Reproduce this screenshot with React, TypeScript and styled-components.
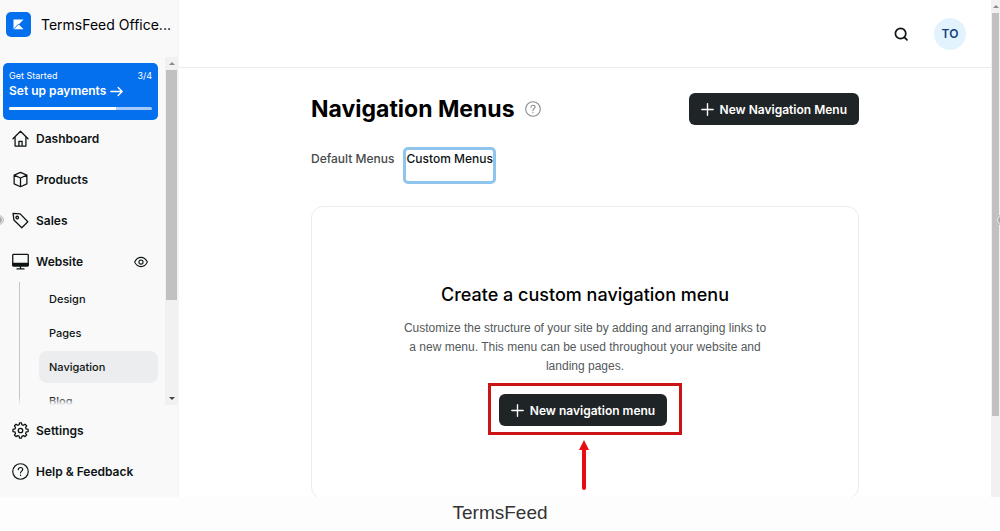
import React from "react";
import styled, { createGlobalStyle, css } from "styled-components";

const Global = createGlobalStyle`
  *, *::before, *::after { box-sizing: border-box; }
  body { margin: 0; background: #fff; color: #0e1414; font-family: Inter, "Liberation Sans", sans-serif; }
  button, a { font: inherit; color: inherit; text-decoration: none; }
  h1, h2, p, ul, figure { margin: 0; padding: 0; }
  ul { list-style: none; }
  svg { flex: none; }
`;

const Figure = styled.figure`
  display: flex;
  flex-direction: column;
  height: 100vh;
`;

const Caption = styled.figcaption`
  flex: none;
  height: 34px;
  line-height: 32px;
  text-align: center;
  font-family: "Liberation Sans", Arial, sans-serif;
  font-size: 19px;
  color: #333;
  background: #fdfdfd;
`;

const Shell = styled.div`
  position: relative;
  flex: 1;
  min-height: 0;
  display: flex;
  overflow: hidden;
`;

const Sidebar = styled.aside`
  flex: none;
  width: 179px;
  display: flex;
  flex-direction: column;
  background: #f9f9fa;
  border-right: 1px solid #f6f6f7;
`;

const Brand = styled.div`
  flex: none;
  height: 57px;
  padding: 12px 6px 0;
  display: flex;
  align-items: flex-start;
  gap: 10px;
`;

const BrandName = styled.span`
  font-size: 14px;
  font-weight: 400;
  line-height: 25px;
  color: #000;
  white-space: nowrap;
`;

const ScrollRegion = styled.div`
  flex: 1;
  min-height: 0;
  display: flex;
`;

const NavViewport = styled.nav`
  position: relative;
  flex: 1;
  overflow: hidden;
  padding: 6px 7px 0 3px;
  &::after {
    content: "";
    position: absolute;
    left: 0;
    right: 0;
    bottom: 0;
    height: 8px;
    background: linear-gradient(#f9f9fa00, #f9f9fa);
  }
`;

const Track = styled.div<{ $width: number }>`
  flex: none;
  width: ${(p) => p.$width}px;
  display: flex;
  flex-direction: column;
  align-items: center;
  background: #f1f1f1;
`;

const Thumb = styled.div<{ $share: string }>`
  width: calc(100% - 2px);
  height: ${(p) => p.$share};
  background: #c1c1c1;
`;

const ArrowCap = styled.span<{ $down?: boolean; $tone: string }>`
  flex: none;
  height: 13px;
  display: flex;
  align-items: center;
  margin-top: ${(p) => (p.$down ? "auto" : 0)};
  &::before {
    content: "";
    border: 3px solid transparent;
    ${(p) =>
      p.$down
        ? css`border-top-color: ${p.$tone}; border-bottom: 0;`
        : css`border-bottom-color: ${p.$tone}; border-top: 0;`}
  }
`;

const SetupCard = styled.a`
  display: block;
  height: 57px;
  padding: 7px 6px;
  border-radius: 5px;
  background: #0570ee;
  color: #fff;
`;

const SetupMeta = styled.div`
  display: flex;
  justify-content: space-between;
  font-size: 9px;
  line-height: 12px;
`;

const SetupTitle = styled.div`
  display: flex;
  align-items: center;
  gap: 4px;
  font-size: 12px;
  font-weight: 600;
  line-height: 18px;
`;

const Progress = styled.div`
  margin-top: 7px;
  height: 3px;
  border-radius: 2px;
  background: #a6cbfa;
  overflow: hidden;
  &::before {
    content: "";
    display: block;
    width: 75%;
    height: 100%;
    background: #fff;
  }
`;

const NavList = styled.ul`
  display: grid;
  gap: 4px;
`;

const NavItem = styled.a`
  display: flex;
  align-items: center;
  gap: 7px;
  height: 37px;
  padding: 0 10px 0 9px;
  font-size: 12px;
  font-weight: 600;
  white-space: nowrap;
  svg:last-child { margin-left: auto; }
`;

const SubList = styled.ul`
  margin: 2px 0 0 16px;
  padding: 1px 0 0 19px;
  border-left: 1px solid #c3c6c9;
`;

const SubItem = styled.a<{ $active?: boolean }>`
  display: flex;
  align-items: center;
  height: 32px;
  margin-bottom: 2px;
  padding: 0 10px;
  border-radius: 8px;
  font-size: 11px;
  font-weight: 500;
  background: ${(p) => (p.$active ? "#ebedef" : "transparent")};
`;

const SidebarFooter = styled.nav`
  flex: none;
  height: 92px;
  padding: 7px 3px 0;
`;

const Main = styled.main`
  flex: 1;
  min-width: 0;
  display: flex;
  flex-direction: column;
`;

const TopBar = styled.header`
  flex: none;
  height: 68px;
  padding: 0 25px;
  display: flex;
  align-items: center;
  justify-content: flex-end;
  gap: 25px;
  border-bottom: 1px solid #ececee;
`;

const IconButton = styled.button`
  display: flex;
  padding: 0;
  border: 0;
  background: none;
`;

const Avatar = styled.button`
  width: 32px;
  height: 32px;
  padding: 0;
  border: 0;
  border-radius: 50%;
  background: #e3f3fe;
  color: #143f7c;
  font-size: 12px;
  font-weight: 600;
`;

const Content = styled.div`
  width: 100%;
  max-width: 548px;
  margin: 0 auto;
  padding-top: 25px;
`;

const TitleRow = styled.div`
  display: flex;
  align-items: center;
  gap: 10px;
`;

const Title = styled.h1`
  font-size: 23px;
  font-weight: 700;
  line-height: 32px;
  color: #000;
  white-space: nowrap;
`;

const PrimaryButton = styled.button`
  display: flex;
  align-items: center;
  gap: 6px;
  height: 32px;
  padding: 0 12px;
  border: 0;
  border-radius: 6px;
  background: #1f2426;
  color: #fff;
  font-size: 12px;
  font-weight: 600;
  white-space: nowrap;
  ${TitleRow} & { margin-left: auto; }
`;

const Tabs = styled.div`
  display: flex;
  align-items: flex-start;
  gap: 9px;
  margin-top: 22px;
`;

const Tab = styled.button<{ $focused?: boolean }>`
  height: 37px;
  padding: 0 0 13px;
  border: solid ${(p) => (p.$focused ? "#8fc4ec" : "transparent")};
  border-width: ${(p) => (p.$focused ? "3px" : "3px 0")};
  border-radius: 5px;
  background: none;
  color: ${(p) => (p.$focused ? "#0e1414" : "#44494b")};
  font-size: 12px;
  font-weight: 500;
  line-height: 18px;
  white-space: nowrap;
`;

const EmptyCard = styled.section`
  display: flex;
  flex-direction: column;
  align-items: center;
  margin-top: 22px;
  padding: 74px 88px 63px;
  border: 1px solid #ececee;
  border-radius: 12px;
  text-align: center;
`;

const EmptyTitle = styled.h2`
  font-size: 18px;
  font-weight: 500;
  line-height: 28px;
  color: #000;
  white-space: nowrap;
`;

const EmptyText = styled.p`
  margin-top: 10px;
  font-family: "Liberation Sans", Arial, sans-serif;
  font-size: 12px;
  line-height: 19px;
  color: #54595b;
`;

const Highlight = styled.div`
  position: relative;
  margin-top: 7px;
  padding: 8px 12px 6px 8px;
  border: 3px solid #cc1417;
`;

const Pointer = styled.svg`
  position: absolute;
  top: 100%;
  left: 50%;
  margin: 8px 0 0 -7px;
`;

const PanelHandle = styled.span<{ $side: "left" | "right" }>`
  position: absolute;
  top: 215px;
  ${(p) => p.$side}: -6px;
  width: 10px;
  height: 10px;
  border: 1px solid #c4c4c4;
  border-radius: 50%;
  background: #aaa;
  box-shadow: inset 0 0 0 1px #eee;
`;

type IconProps = { size: number; children: React.ReactNode; weight?: number; color?: string };
const Icon = ({ size, children, weight = 1.2, color = "currentColor" }: IconProps) => (
  <svg width={size} height={size} viewBox="0 0 16 16" fill="none" stroke={color} strokeWidth={weight} strokeLinejoin="round" strokeLinecap="round" aria-hidden="true">
    {children}
  </svg>
);

const Plus = () => <Icon size={13} weight={1.7}><path d="M8 1v14M1 8h14" /></Icon>;
const Help = ({ size, color }: { size: number; color?: string }) => (
  <Icon size={size} color={color} weight={1.1}>
    <circle cx="8" cy="8" r="7.3" />
    <path d="M5.900 6.200c.1-1.300 1-2 2.100-2 1.200 0 2.100.8 2.100 1.900 0 1.500-2.100 1.700-2.100 3.300M8 11.400v.3" />
  </Icon>
);

const House = () => <Icon size={17}><path d="M.9 8.200 8 1.200l7.100 7M2.900 6.600v8.500h10.200V6.600M6.500 15v-4.300h3V15" /></Icon>;
const Box = () => <Icon size={17}><path d="M8 1.300l6 2.500v8.300l-6 2.700-6-2.700V3.800zM2 3.900l6 2.700 6-2.700M8 6.600v8.100" /></Icon>;
const Tag = () => <Icon size={17}><path d="M1 1.300l6.700.5 7.200 7.400-5.700 5.600L1.800 7.600z" /><circle cx="4.900" cy="5.200" r="1.200" /></Icon>;
const Monitor = () => (
  <Icon size={17}>
    <rect x=".7" y="1.200" width="14.600" height="11" rx=".8" />
    <path d="M.9 9.700h14.200v2.300H.9z" fill="currentColor" />
    <path d="M8 12v2.900M4.700 15h6.600" />
  </Icon>
);
const Eye = () => <Icon size={14}><path d="M.7 8C2.400 4.600 5 2.700 8 2.700s5.600 1.900 7.300 5.300c-1.700 3.400-4.300 5.300-7.300 5.300S2.400 11.400.7 8z" /><circle cx="8" cy="8" r="2.400" /></Icon>;
const Gear = () => (
  <Icon size={17}>
    <path d="M6.700 2.600 7.100.8h1.800l.4 1.800 1.300.5 1.600-1 1.600 1.500-1 1.600.5 1.300 1.900.5v2l-1.900.4-.5 1.300 1 1.600-1.500 1.500-1.600-1-1.300.5-.5 1.900H7.100l-.4-1.900-1.300-.5-1.600 1-1.500-1.500 1-1.600-.5-1.300-1.900-.4v-2l1.900-.5.5-1.300-1-1.600 1.500-1.500 1.600 1z" />
    <circle cx="8" cy="8" r="2.100" />
  </Icon>
);

const Logo = () => (
  <svg width="25" height="25" viewBox="0 0 25 25" role="img" aria-label="Brand logo">
    <rect width="25" height="25" rx="5" fill="#0570ee" />
    <path d="M7.500 7.500h10L12.700 12.400l4.800 4.900h-10z" fill="#fff" />
    <path d="M7 17.800 12.700 12" stroke="#0570ee" strokeWidth=".9" />
  </svg>
);

const pages = ["Design", "Pages", "Navigation", "Blog"];

export default function App() {
  return (
    <>
      <Global />
      <Figure>
        <Shell>
          <Sidebar>
            <Brand><Logo /><BrandName>TermsFeed Office...</BrandName></Brand>
            <ScrollRegion>
              <NavViewport>
                <SetupCard href="#setup">
                  <SetupMeta><span>Get Started</span><span>3/4</span></SetupMeta>
                  <SetupTitle>
                    Set up payments
                    <Icon size={13} weight={1.6}><path d="M1 8h14M10 3l5 5-5 5" /></Icon>
                  </SetupTitle>
                  <Progress />
                </SetupCard>
                <NavList>
                  <li><NavItem href="#dashboard"><House /><span>Dashboard</span></NavItem></li>
                  <li><NavItem href="#products"><Box /><span>Products</span></NavItem></li>
                  <li><NavItem href="#sales"><Tag /><span>Sales</span></NavItem></li>
                  <li>
                    <NavItem href="#website"><Monitor /><span>Website</span><Eye /></NavItem>
                    <SubList>
                      {pages.map((p) => (
                        <li key={p}><SubItem href={"#" + p.toLowerCase()} $active={p === "Navigation"}>{p}</SubItem></li>
                      ))}
                    </SubList>
                  </li>
                </NavList>
              </NavViewport>
              <Track $width={13}>
                <ArrowCap $tone="#8b8b8b" />
                <Thumb $share="66%" />
                <ArrowCap $down $tone="#444" />
              </Track>
            </ScrollRegion>
            <SidebarFooter>
              <NavList>
                <li><NavItem href="#settings"><Gear /><span>Settings</span></NavItem></li>
                <li><NavItem href="#help"><Help size={17} /><span>Help &amp; Feedback</span></NavItem></li>
              </NavList>
            </SidebarFooter>
          </Sidebar>
          <Main>
            <TopBar>
              <IconButton aria-label="Search">
                <Icon size={16} weight={1.7}><circle cx="7.600" cy="7.500" r="5.200" /><path d="M11.400 11.300l2.600 2.600" /></Icon>
              </IconButton>
              <Avatar>TO</Avatar>
            </TopBar>
            <Content>
              <TitleRow>
                <Title>Navigation Menus</Title>
                <IconButton aria-label="About navigation menus"><Help size={16} color="#858a8d" /></IconButton>
                <PrimaryButton><Plus />New Navigation Menu</PrimaryButton>
              </TitleRow>
              <Tabs>
                <Tab>Default Menus</Tab>
                <Tab $focused>Custom Menus</Tab>
              </Tabs>
              <EmptyCard>
                <EmptyTitle>Create a custom navigation menu</EmptyTitle>
                <EmptyText>
                  Customize the structure of your site by adding and arranging links to a new menu. This menu can be used throughout your website and landing pages.
                </EmptyText>
                <Highlight>
                  <PrimaryButton><Plus />New navigation menu</PrimaryButton>
                  <Pointer width="12" height="52" viewBox="0 0 12 52" aria-hidden="true">
                    <path d="M6 0l5 10H1z" fill="#e60c12" />
                    <path d="M6 9v39" stroke="#e60c12" strokeWidth="4" strokeLinecap="round" />
                  </Pointer>
                </Highlight>
              </EmptyCard>
            </Content>
          </Main>
          <Track $width={9}>
            <ArrowCap $tone="#8b8b8b" />
            <Thumb $share="81%" />
          </Track>
          <PanelHandle $side="left" />
          <PanelHandle $side="right" />
        </Shell>
        <Caption>TermsFeed</Caption>
      </Figure>
    </>
  );
}
